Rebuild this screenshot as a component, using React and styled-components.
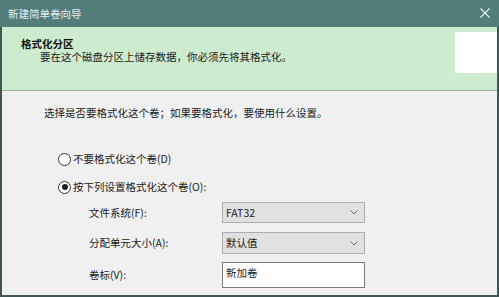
import React from 'react';
import styled, { createGlobalStyle } from 'styled-components';

const GlobalStyle = createGlobalStyle`
  html, body {
    margin: 0;
    padding: 0;
    background: #f0f0f0;
  }
  body {
    font-family: "Noto Sans CJK SC", "Noto Sans", sans-serif;
    font-size: 10.5px;
    color: #1a1a1a;
  }
`;

const Window = styled.div`
  width: 499px;
  height: 297px;
  display: flex;
  flex-direction: column;
  overflow: hidden;
`;

const TitleBar = styled.div`
  height: 27px;
  flex-shrink: 0;
  background: #527d7b;
  display: flex;
  align-items: center;
  justify-content: space-between;
  padding: 0 6px 1px 8px;
  box-sizing: border-box;
  color: #e8efee;
  font-size: 10.5px;
`;

const CloseButton = styled.span`
  display: flex;
  width: 16px;
  height: 16px;
  align-items: center;
  justify-content: center;
`;

const Frame = styled.div`
  flex: 1;
  display: flex;
  flex-direction: column;
  border: 2px solid #3f5654;
  border-top: none;
  background: #f0f0f0;
`;

const Header = styled.div`
  height: 64px;
  flex-shrink: 0;
  background: #cdebcf;
  border-bottom: 1px solid #a3aca4;
  display: flex;
  justify-content: space-between;
  padding: 5px 0 0 19px;
  box-sizing: border-box;
`;

const HeaderText = styled.div`
  padding-top: 5px;
  display: flex;
  flex-direction: column;
  line-height: 13px;
`;

const HeaderTitle = styled.div`
  font-weight: bold;
  color: #111;
`;

const HeaderDesc = styled.div`
  padding-left: 19px;
  color: #1a1a1a;
`;

const HeaderIcon = styled.div`
  width: 42px;
  height: 41px;
  background: #ffffff;
`;

const Content = styled.div`
  flex: 1;
  padding: 15px 0 0 42px;
  line-height: 14px;
`;

const Prompt = styled.div`
  margin-bottom: 32px;
`;

const RadioRow = styled.label`
  display: flex;
  align-items: center;
  gap: 2px;
  height: 14px;
  margin-left: 14px;
  margin-bottom: ${(p) => p.$gap || 0}px;
`;

const RadioCircle = styled.span`
  width: 11px;
  height: 11px;
  border: 1px solid #333;
  border-radius: 50%;
  background: #fff;
  display: flex;
  align-items: center;
  justify-content: center;
  flex-shrink: 0;
  &::after {
    content: '';
    display: ${(p) => (p.$checked ? 'block' : 'none')};
    width: 6px;
    height: 6px;
    border-radius: 50%;
    background: #222;
  }
`;

const Form = styled.div`
  display: grid;
  grid-template-columns: 133px 143px;
  align-items: center;
  margin-left: 45px;
`;

const FieldLabel = styled.div`
  margin-bottom: ${(p) => p.$gap || 0}px;
`;

const Select = styled.div`
  height: ${(p) => p.$h}px;
  margin-bottom: ${(p) => p.$gap || 0}px;
  box-sizing: border-box;
  background: #e1e1e1;
  border: 1px solid #adadad;
  display: flex;
  align-items: center;
  justify-content: space-between;
  padding: 0 6px 0 3px;
`;

const TextInput = styled.div`
  height: 26px;
  box-sizing: border-box;
  background: #fff;
  border: 1px solid #7a7a7a;
  display: flex;
  align-items: center;
  padding: 0 3px 4px;
`;

const Chevron = () => (
  <svg width="8" height="5" viewBox="0 0 8 5">
    <path d="M0.5 0.5 L4 4 L7.5 0.5" fill="none" stroke="#6a6a6a" strokeWidth="1" />
  </svg>
);

export default function App() {
  return (
    <>
      <GlobalStyle />
      <Window>
        <TitleBar>
          <span>新建简单卷向导</span>
          <CloseButton>
            <svg width="10" height="10" viewBox="0 0 10 10">
              <path d="M0.5 0.5 L9.5 9.5 M9.5 0.5 L0.5 9.5" stroke="#eef3f2" strokeWidth="1.1" />
            </svg>
          </CloseButton>
        </TitleBar>
        <Frame>
          <Header>
            <HeaderText>
              <HeaderTitle>格式化分区</HeaderTitle>
              <HeaderDesc>要在这个磁盘分区上储存数据，你必须先将其格式化。</HeaderDesc>
            </HeaderText>
            <HeaderIcon />
          </Header>
          <Content>
            <Prompt>选择是否要格式化这个卷；如果要格式化，要使用什么设置。</Prompt>
            <RadioRow $gap={14}>
              <RadioCircle />
              不要格式化这个卷(D)
            </RadioRow>
            <RadioRow $gap={8}>
              <RadioCircle $checked />
              按下列设置格式化这个卷(O):
            </RadioRow>
            <Form>
              <FieldLabel $gap={9}>文件系统(F):</FieldLabel>
              <Select $h={21} $gap={9}>
                <span>FAT32</span>
                <Chevron />
              </Select>
              <FieldLabel $gap={8}>分配单元大小(A):</FieldLabel>
              <Select $h={22} $gap={8}>
                <span>默认值</span>
                <Chevron />
              </Select>
              <FieldLabel>卷标(V):</FieldLabel>
              <TextInput>新加卷</TextInput>
            </Form>
          </Content>
        </Frame>
      </Window>
    </>
  );
}
